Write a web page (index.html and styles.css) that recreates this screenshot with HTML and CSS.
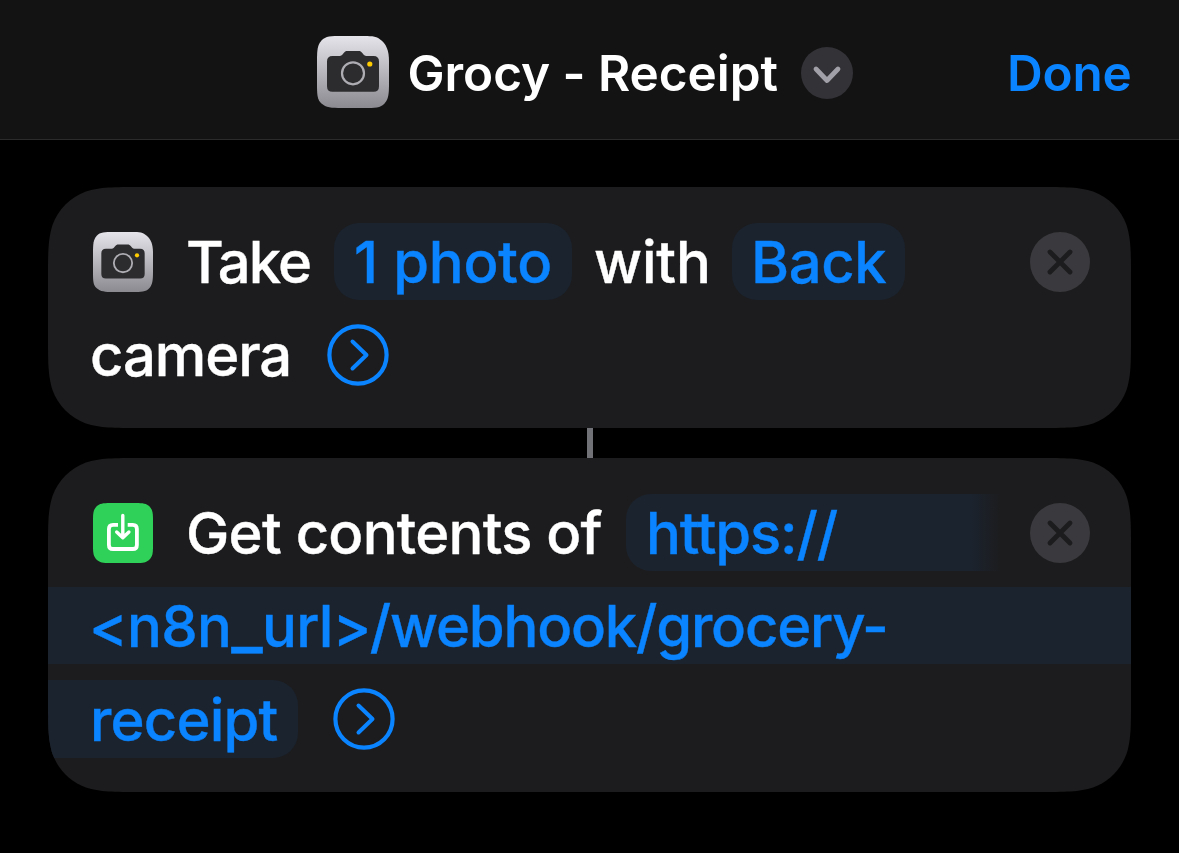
FILE: index.html
```html
<!DOCTYPE html>
<html lang="en">
<head>
<meta charset="utf-8">
<title>Grocy - Receipt</title>
<link rel="stylesheet" href="styles.css">
</head>
<body>
<svg class="defs" aria-hidden="true">
  <defs>
    <linearGradient id="silver" x1="0" y1="0" x2="0" y2="1"><stop offset="0" stop-color="#e5e4ea"/><stop offset="1" stop-color="#8b8a90"/></linearGradient>
    <symbol id="camera" viewBox="0 0 72 72">
      <path fill="url(#silver)" d="M25 0H47C56 0 60 .5 64.500 4.500S72 14 72 25V47C72 58 71.500 63 67.500 67.500S58 72 47 72H25C14 72 9 71.500 4.500 67.500S0 58 0 47V25C0 14 .5 9 4.500 4.500S14 0 25 0Z"/>
      <path fill="#2c2c2e" d="M15.500 20H22.500C24.500 20 25 19 26.500 17.200C27.800 15.600 28.600 15 30.500 15H41.500C43.400 15 44.200 15.600 45.500 17.200C47 19 47.500 20 49.500 20H56.500Q62 20 62 25.500V50.300Q62 55.800 56.500 55.800H15.500Q10 55.800 10 50.300V25.500Q10 20 15.500 20Z"/>
      <circle cx="36" cy="37.300" r="11" fill="none" stroke="#aeadb3" stroke-width="2.200"/>
      <circle cx="52.800" cy="28" r="2.600" fill="#ffcc00"/>
    </symbol>
    <symbol id="remove" viewBox="0 0 60 60">
      <circle cx="30" cy="30" r="30" fill="#3a393d"/>
      <path d="M20 20L40 40M40 20L20 40" stroke="#1c1c1e" stroke-width="4.800" stroke-linecap="round"/>
    </symbol>
    <symbol id="expand" viewBox="0 0 62 62">
      <circle cx="31" cy="31" r="28.600" fill="none" stroke="#0a84ff" stroke-width="4.200"/>
      <path d="M25.500 17.500L39.500 31L25.500 44.500" fill="none" stroke="#0a84ff" stroke-width="4" stroke-linecap="round" stroke-linejoin="round"/>
    </symbol>
  </defs>
</svg>
<header class="bar">
  <svg class="bar-icon"><use href="#camera"/></svg>
  <h1 class="title">Grocy - Receipt</h1>
  <svg class="chevron" viewBox="0 0 52 52"><circle cx="26" cy="26" r="26" fill="#333237"/><path d="M15 22L26 33.500L37 22" fill="none" stroke="#a1a0a8" stroke-width="4.800" stroke-linecap="round" stroke-linejoin="round"/></svg>
  <span class="done">Done</span>
</header>
<main class="actions">
  <section class="card card-photo">
    <div class="row">
      <svg class="icon"><use href="#camera"/></svg>
      <span class="word take">Take</span>
      <span class="pill count">1 photo</span>
      <span class="word with">with</span>
      <span class="pill back">Back</span>
      <svg class="remove"><use href="#remove"/></svg>
    </div>
    <div class="row">
      <span class="word cam">camera</span>
      <svg class="expand"><use href="#expand"/></svg>
    </div>
  </section>
  <div class="connector"></div>
  <section class="card card-url">
    <div class="row">
      <svg class="icon" viewBox="0 0 60 60">
        <path fill="#30d158" d="M17 0H43C50 0 53.500 .5 56.500 3.500S60 10 60 17V43C60 50 59.500 53.500 56.500 56.500S50 60 43 60H17C10 60 6.500 59.500 3.500 56.500S0 50 0 43V17C0 10 .5 6.500 3.500 3.500S10 0 17 0Z"/>
        <path fill="none" stroke="#fff" stroke-width="3.800" d="M25 21.900H20Q15.900 21.900 15.900 26V41.900Q15.900 46 20 46H39.800Q43.900 46 43.900 41.900V26Q43.900 21.900 39.800 21.900H34.700"/>
        <path fill="none" stroke="#fff" stroke-width="3.400" stroke-linecap="round" stroke-linejoin="round" d="M29.800 12.500V34M23.700 29L29.800 34.800L35.900 29"/>
      </svg>
      <span class="word get">Get contents of</span>
      <span class="pill scheme">https://</span>
      <svg class="remove"><use href="#remove"/></svg>
    </div>
    <div class="row band"><span class="host">&lt;n8n<span class="underscore">_</span>url&gt;</span><span class="path">/webhook/grocery-</span></div>
    <div class="row">
      <span class="pill tail">receipt</span>
      <svg class="expand"><use href="#expand"/></svg>
    </div>
  </section>
</main>
</body>
</html>
```
FILE: styles.css
```css
body {
  margin: 0;
  background: #000;
  color: #fff;
  font-family: Inter, "Liberation Sans", sans-serif;
  overflow: hidden;
}
svg { display: block; flex: none; }
.defs { position: absolute; width: 0; height: 0; }
.bar {
  box-sizing: border-box;
  height: 140px;
  padding: 5px 0 0 317px;
  display: flex;
  align-items: center;
  background: #131313;
  border-bottom: 1px solid #2b2b2c;
}
.bar-icon { width: 72px; height: 72px; margin-top: -1px; }
.title {
  margin: 2px 0 0 18.500px;
  width: 393.500px;
  font-size: 49.500px;
  line-height: 60px;
  font-weight: 600;
  letter-spacing: -0.05px;
  white-space: nowrap;
}
.chevron { width: 52px; height: 52px; margin-top: 1px; }
.done {
  margin: 2px 0 0 154px;
  color: #0a84ff;
  font-size: 49.500px;
  line-height: 60px;
  font-weight: 600;
  letter-spacing: -0.2px;
}
.actions { padding: 47px 48px 0; }
.card {
  box-sizing: border-box;
  padding-top: 35.500px;
  display: flex;
  flex-direction: column;
  gap: 15.400px;
  background: #1c1c1e;
  font-size: 58px;
  font-weight: 500;
  -webkit-text-stroke: 0.4px currentColor;
  line-height: 78px;
  white-space: nowrap;
}
.card-photo {
  height: 241px;
  clip-path: path("M91.7 0H991.3C1017.7 0 1030.9 0 1045.1 4.5C1060.6 10.1 1072.9 22.4 1078.5 37.9C1083 52.1 1083 65.3 1083 91.7V149.3C1083 175.7 1083 188.9 1078.5 203.1C1072.9 218.6 1060.6 230.9 1045.1 236.5C1030.9 241 1017.7 241 991.3 241H91.7C65.3 241 52.1 241 37.9 236.5C22.4 230.9 10.1 218.6 4.5 203.1C0 188.9 0 175.7 0 149.3V91.7C0 65.3 0 52.1 4.5 37.9C10.1 22.4 22.4 10.1 37.9 4.5C52.1 0 65.3 0 91.7 0Z");
}
.card-url {
  height: 334px;
  clip-path: path("M91.7 0H991.3C1017.7 0 1030.9 0 1045.1 4.5C1060.6 10.1 1072.9 22.4 1078.5 37.9C1083 52.1 1083 65.3 1083 91.7V242.3C1083 268.7 1083 281.9 1078.5 296.1C1072.9 311.6 1060.6 323.9 1045.1 329.5C1030.9 334 1017.7 334 991.3 334H91.7C65.3 334 52.1 334 37.9 329.5C22.4 323.9 10.1 311.6 4.5 296.1C0 281.9 0 268.7 0 242.3V91.7C0 65.3 0 52.1 4.5 37.9C10.1 22.4 22.4 10.1 37.9 4.5C52.1 0 65.3 0 91.7 0Z");
}
.connector { width: 6px; height: 30px; margin-left: 539px; background: #717278; }
.row { display: flex; align-items: center; height: 77.800px; }
.icon { width: 60px; height: 60px; margin: 1px 0 0 45px; }
.word, .pill { box-sizing: border-box; flex: none; }
.word { padding-top: 1px; }
.pill {
  height: 77.800px;
  padding-left: 20px;
  border-radius: 25px;
  background: #1b232e;
  color: #0a84ff;
}
.take { width: 148px; margin-left: 33px; letter-spacing: -1.9px; }
.count { width: 237.500px; letter-spacing: -0.2px; }
.with { width: 138px; margin-left: 22.500px; letter-spacing: -0.2px; }
.back { width: 173px; padding-left: 19px; letter-spacing: -0.4px; }
.remove { width: 60px; height: 60px; margin: 1px 41px 0 auto; }
.cam { width: 237px; margin-left: 42px; letter-spacing: -1.1px; }
.expand { width: 62px; height: 62px; }
.get { width: 440px; margin-left: 33px; letter-spacing: -0.75px; }
.scheme {
  width: 380px;
  letter-spacing: -1.15px;
  border-radius: 25px 0 0 25px;
  background: linear-gradient(90deg, #1b232e 345px, #1c1c1e 374px);
}
.band { background: #1b232e; color: #0a84ff; }
.host { margin-left: 41px; letter-spacing: -0.7px; }
.underscore { font-size: 68px; line-height: 0; }
.path { margin-left: -1px; letter-spacing: -1.2px; }
.tail {
  width: 250px;
  padding: 1px 0 0 42px;
  margin-right: 35px;
  border-radius: 0 25px 25px 0;
  letter-spacing: -0.8px;
}
```
